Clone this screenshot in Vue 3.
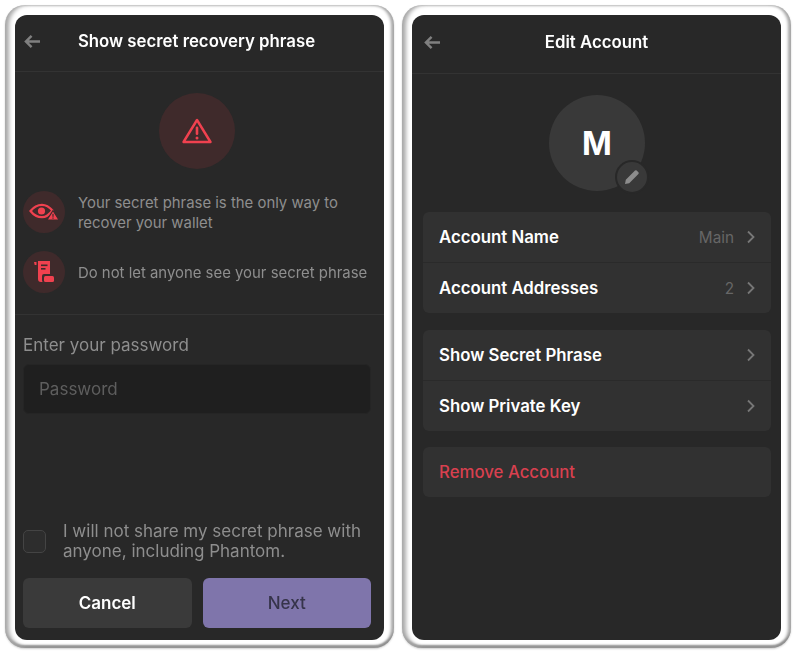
<template>
  <div class="page">
    <div class="frame">
      <section class="panel">
        <header class="top">
          <svg class="back" viewBox="0 0 18 16"><path d="M8 2 2 8l6 6M2.500 8H17" /></svg>
          <h1 class="title title-left">Show secret recovery phrase</h1>
        </header>

        <div class="warn-wrap">
          <div class="warn">
            <svg width="32" height="28" viewBox="0 0 32 28">
              <path class="tri" d="M16 3 2.500 25h27L16 3Z" />
              <rect x="14.700" y="9.500" width="2.600" height="8.500" rx="1.300" fill="#f0414f" />
              <circle cx="16" cy="21" r="1.500" fill="#f0414f" />
            </svg>
          </div>
        </div>

        <div class="notes">
          <div class="note note-first">
            <div class="note-icon">
              <svg width="30" height="18" viewBox="0 0 30 18">
                <path class="eye" d="M1.500 8C5 3.500 9 1.800 13 1.800S20 3.500 23.500 7.500C20 12 17 14.200 13 14.200S5 12.500 1.500 8Z" />
                <circle cx="12.500" cy="8" r="3.600" fill="#f0414f" />
                <path d="M24 7.500 30 17H18Z" fill="#f0414f" stroke="#3f2a2b" stroke-width="1.200" />
                <rect x="23.400" y="10.800" width="1.200" height="3" fill="#3f2a2b" />
                <rect x="23.400" y="14.500" width="1.200" height="1.200" fill="#3f2a2b" />
              </svg>
            </div>
            <p>Your secret phrase is the only way to recover your wallet</p>
          </div>
          <div class="note">
            <div class="note-icon">
              <svg width="22" height="24" viewBox="0 0 22 24">
                <path d="M1 2h2.500v3H1.700ZM5 1h12v13H11a2 2 0 0 0-2 2v4c0 .8.200 1.500.600 2H8a3 3 0 0 1-3-3Z" fill="#f0414f" />
                <rect x="8" y="4.500" width="6.500" height="1.600" fill="#3f2a2b" />
                <rect x="8" y="8" width="4.500" height="1.600" fill="#3f2a2b" />
                <rect x="11" y="16" width="10" height="6" rx="1.500" fill="#f0414f" />
              </svg>
            </div>
            <p>Do not let anyone see your secret phrase</p>
          </div>
        </div>

        <div class="form">
          <label class="field-label">Enter your password</label>
          <div class="input">Password</div>
          <div class="agree">
            <span class="check"></span>
            <p>I will not share my secret phrase with anyone, including Phantom.</p>
          </div>
          <div class="actions">
            <button class="btn cancel">Cancel</button>
            <button class="btn next">Next</button>
          </div>
        </div>
      </section>
    </div>

    <div class="frame">
      <section class="panel">
        <header class="top top-right">
          <svg class="back" viewBox="0 0 18 16"><path d="M8 2 2 8l6 6M2.500 8H17" /></svg>
          <h1 class="title">Edit Account</h1>
        </header>

        <div class="avatar-wrap">
          <div class="avatar">
            M
            <span class="edit">
              <svg width="20" height="20" viewBox="0 0 20 20">
                <path d="M3 17l.8-4.200L13 3.600a1.200 1.200 0 0 1 1.700 0l1.700 1.700a1.200 1.200 0 0 1 0 1.700L7.200 16.200Z" fill="#8c8c8c" />
              </svg>
            </span>
          </div>
        </div>

        <div class="groups">
          <div v-for="(group, g) in groups" :key="g" class="group">
            <div v-for="row in group" :key="row.label" class="row">
              <span class="row-label" :class="{ danger: row.danger }">{{ row.label }}</span>
              <span v-if="row.value" class="row-value">{{ row.value }}</span>
              <svg v-if="!row.danger" class="chev" viewBox="0 0 8 14"><path d="M1 1.500 6.500 7 1 12.500" /></svg>
            </div>
          </div>
        </div>
      </section>
    </div>
  </div>
</template>

<script setup>
const groups = [
  [
    { label: "Account Name", value: "Main" },
    { label: "Account Addresses", value: "2" },
  ],
  [{ label: "Show Secret Phrase" }, { label: "Show Private Key" }],
  [{ label: "Remove Account", danger: true }],
];
</script>

<style>
html,
body {
  background: #fff;
}
</style>

<style scoped>
.page {
  display: flex;
  gap: 8px;
  width: 800px;
  height: 653px;
  box-sizing: border-box;
  padding: 5px 9px 5px 5px;
  font-family: Inter, "Liberation Sans", sans-serif;
  background: #fff;
  overflow: hidden;
}

.frame {
  width: 389px;
  height: 643px;
  box-sizing: border-box;
  padding: 10px 10px 8px;
  border-radius: 20px;
  background: #fff;
  box-shadow:
    inset 5px 0 4px -1px #a8a8a8,
    inset 0 -4px 2px -1px #8f8f8f,
    inset -4px 0 3px -1px #a8a8a8,
    inset 0 2px 2px -1px #d6d6d6,
    0 1px 2px #cfcfcf;
}

.panel {
  display: flex;
  flex-direction: column;
  height: 100%;
  border-radius: 12px;
  background: #282828;
  overflow: hidden;
  filter: blur(0.4px);
}

.top {
  position: relative;
  display: flex;
  align-items: center;
  justify-content: center;
  height: 57px;
  padding-bottom: 5px;
  box-sizing: border-box;
  flex: none;
  border-bottom: 1px solid #333;
}

.top-right {
  height: 59px;
}

.back {
  position: absolute;
  left: 9px;
  top: 19px;
  width: 17px;
  height: 15px;
  fill: none;
  stroke: #808080;
  stroke-width: 2.600;
}

.top-right .back {
  left: 12px;
  top: 20px;
}

.title {
  margin: 0;
  color: #fff;
  font-size: 16.800px;
  font-weight: 600;
}

.title-left {
  margin-right: 6px;
}

.warn-wrap {
  display: flex;
  justify-content: center;
  padding: 21px 5px 0 0;
}

.warn {
  display: flex;
  align-items: center;
  justify-content: center;
  width: 76px;
  height: 76px;
  border-radius: 50%;
  background: #3f2a2b;
}

.tri {
  fill: none;
  stroke: #f0414f;
  stroke-width: 2.400;
  stroke-linejoin: round;
}

.eye {
  fill: none;
  stroke: #f0414f;
  stroke-width: 2.200;
}

.notes {
  display: flex;
  flex-direction: column;
  gap: 17.500px;
  padding: 22px 8px 0;
}

.note {
  display: flex;
  align-items: center;
  gap: 13px;
}

.note p {
  margin: 0;
  padding-top: 2px;
  color: #8e8e8e;
  font-size: 14.900px;
  line-height: 20px;
}

.note-icon {
  display: flex;
  align-items: center;
  justify-content: center;
  flex: none;
  width: 42px;
  height: 42px;
  border-radius: 50%;
  background: #3f2a2b;
}

.form {
  display: flex;
  flex: 1;
  flex-direction: column;
  margin-top: 21px;
  padding: 20px 13px 12px 8px;
  border-top: 1px solid #333;
}

.field-label {
  color: #8e8e8e;
  font-size: 17px;
  line-height: 20px;
}

.input {
  display: flex;
  align-items: center;
  height: 50px;
  box-sizing: border-box;
  margin-top: 9px;
  padding-left: 15px;
  border: 1px solid #252525;
  border-radius: 6px;
  background: #1f1f1f;
  color: #5e5e5e;
  font-size: 17px;
}

.agree {
  display: flex;
  align-items: center;
  gap: 17px;
  margin-top: auto;
}

.agree p {
  margin: 0;
  color: #8e8e8e;
  font-size: 17px;
  line-height: 20px;
}

.check {
  flex: none;
  width: 23px;
  height: 23px;
  box-sizing: border-box;
  border: 1px solid #444;
  border-radius: 5px;
  background: #2d2d2d;
}

.actions {
  display: flex;
  gap: 11px;
  margin-top: 17px;
}

.btn {
  flex: 1;
  height: 50px;
  border: 0;
  border-radius: 6px;
  font-family: inherit;
  font-size: 17px;
  font-weight: 600;
}

.cancel {
  background: #3a3a3a;
  color: #fff;
}

.next {
  background: #7f75ab;
  color: #36344a;
  font-weight: 500;
}

.avatar-wrap {
  display: flex;
  justify-content: center;
  padding: 21px 0 0 1px;
}

.avatar {
  position: relative;
  display: flex;
  align-items: center;
  justify-content: center;
  width: 96px;
  height: 96px;
  border-radius: 50%;
  background: #393939;
  color: #fff;
  font-size: 32px;
  font-weight: 700;
}

.edit {
  position: absolute;
  right: -4px;
  bottom: -3px;
  display: flex;
  align-items: center;
  justify-content: center;
  width: 30px;
  height: 30px;
  border: 2px solid #282828;
  border-radius: 50%;
  background: #393939;
}

.groups {
  display: flex;
  flex-direction: column;
  gap: 16.500px;
  margin: 21px 10px 0 11px;
}

.group {
  border-radius: 6px;
  background: #313131;
}

.row {
  display: flex;
  align-items: center;
  height: 50px;
  padding: 0 16px;
}

.row + .row {
  border-top: 1px solid #2a2a2a;
}

.row-label {
  flex: 1;
  color: #fff;
  font-size: 16.800px;
  font-weight: 600;
}

.danger {
  color: #d8404f;
  font-weight: 500;
}

.row-value {
  margin-right: 13px;
  color: #666;
  font-size: 15.300px;
}

.chev {
  width: 8px;
  height: 14px;
  fill: none;
  stroke: #777;
  stroke-width: 1.800;
}
</style>
